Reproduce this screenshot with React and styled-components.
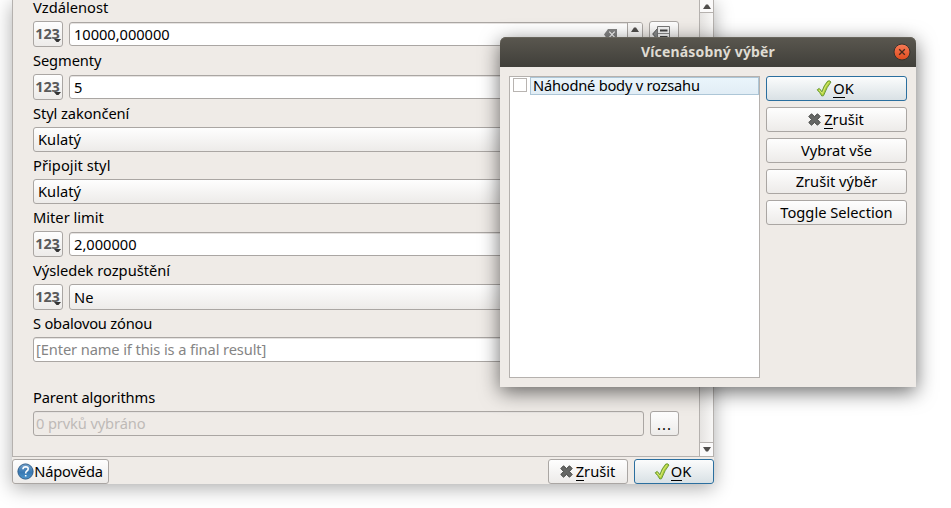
import React from "react";
import styled, { createGlobalStyle, css } from "styled-components";

const Global = createGlobalStyle`
  * { box-sizing: border-box; }
  html, body { margin: 0; background: #fff; overflow: hidden; }
  body { font: 14.67px/20px "Noto Sans", "Open Sans", sans-serif; color: #000; }
`;

const Desktop = styled.main`
  position: relative;
  width: 951px;
  height: 508px;
  overflow: hidden;
  padding-left: 12px;
`;

const Window = styled.section`
  width: 702px;
  height: 484px;
  background: #efebe7;
  box-shadow: 0 4px 18px rgba(0, 0, 0, 0.33);
`;

const ScrollArea = styled.div`
  display: flex;
  height: 457px;
  border: 1px solid #b5b1ae;
  border-top: 0;
`;

const Form = styled.div`
  flex: 1;
  height: 456px;
  padding: 0 20px;
  display: flex;
  flex-direction: column;
`;

const Text = styled.span`
  white-space: nowrap;
  letter-spacing: ${(p) => p.$ls || 0}px;
`;

const Label = styled.label`
  flex: none;
  display: flex;
  align-items: center;
  height: ${(p) => p.$h || 27}px;
  margin-top: ${(p) => p.$top || 0}px;
  padding-bottom: ${(p) => p.$bottom ?? 2}px;
  line-height: 14px;
`;

const Row = styled.div`
  flex: none;
  display: flex;
  align-items: center;
  gap: 6px;
  height: ${(p) => p.$h || 26}px;
`;

const frame = css`
  border: 1px solid #aaa6a3;
  border-radius: 3px;
`;

const raised = css`
  ${frame}
  background: linear-gradient(#fefefe, #edebe9);
`;

const Input = styled.div`
  ${frame}
  flex: 1;
  display: flex;
  align-items: center;
  height: ${(p) => p.$h || 24}px;
  padding-left: ${(p) => p.$pad ?? 4}px;
  padding-bottom: ${(p) => p.$bottom || 0}px;
  background: ${(p) => (p.$disabled ? "#efebe7" : "#fff")};
  box-shadow: inset 0 1px 0 #e6e3e1;
  color: ${(p) => (p.$disabled ? "#bebab7" : p.$hint ? "#858585" : "#000")};
  overflow: hidden;
`;

const Combo = styled.div`
  ${raised}
  flex: 1;
  display: flex;
  align-items: center;
  height: 100%;
  padding: 0 0 1px 4px;
`;

const ToolButton = styled.button`
  ${raised}
  position: relative;
  flex: none;
  display: flex;
  align-items: center;
  justify-content: center;
  width: ${(p) => p.$w || 30}px;
  height: ${(p) => p.$h || 26}px;
  padding: 0 ${(p) => p.$shift || 0}px ${(p) => p.$lift || 0}px 0;
  font: inherit;
`;

const Digits = styled.span`
  font: bold 14.5px/20px "Noto Sans", sans-serif;
  letter-spacing: -0.1px;
  color: #5a5a5a;
`;

const MenuMark = styled.svg`
  position: absolute;
  right: 1px;
  bottom: 3px;
`;

const Spin = styled.span`
  display: flex;
  justify-content: center;
  width: 15px;
  height: 22px;
  padding-top: 4px;
  margin-left: 10px;
  border-left: 1px solid #aaa6a3;
  background: #f8f7f6;
`;

const Grow = styled.span`
  flex: 1;
`;

const ScrollBar = styled.div`
  display: flex;
  flex-direction: column;
  justify-content: space-between;
  width: 14px;
  border-left: 1px solid #b5b1ae;
  background: linear-gradient(90deg, #e5e3e1, #f8f7f6);
`;

const ScrollStep = styled.div`
  display: flex;
  align-items: center;
  justify-content: center;
  height: ${(p) => (p.$up ? 13 : 14)}px;
  padding-bottom: ${(p) => (p.$up ? 0 : 1)}px;
  border-${(p) => (p.$up ? "bottom" : "top")}: 1px solid #b5b1ae;
  background: #fbfafa;
`;

const Footer = styled.footer`
  display: flex;
  gap: 6px;
  padding-top: 2px;
`;

const PushButton = styled.button`
  ${raised}
  display: flex;
  align-items: center;
  justify-content: center;
  gap: ${(p) => p.$gap ?? 2}px;
  width: ${(p) => (p.$w ? `${p.$w}px` : "100%")};
  height: 25px;
  padding: 0 ${(p) => p.$shift || 0}px 2px 0;
  font: inherit;
  color: #000;
  ${(p) =>
    p.$primary &&
    css`
      border-color: #2b6f9f;
      background: linear-gradient(#fbfcfc, #d9e1e5);
    `}
  & > svg { margin-top: 1px; }
`;

const Key = styled.span`
  box-shadow: 0 -1px 0 #000 inset;
  display: inline-block;
  line-height: 19px;
`;

const Dialog = styled.section`
  position: absolute;
  left: 500px;
  top: 37px;
  width: 416px;
  height: 350px;
  border-radius: 6px 6px 0 0;
  background: #efebe7;
  box-shadow: 0 5px 20px rgba(0, 0, 0, 0.58);
`;

const TitleBar = styled.header`
  display: grid;
  grid-template-columns: 23px 1fr 23px;
  align-items: center;
  height: 30px;
  border-radius: 6px 6px 0 0;
  background: linear-gradient(#5a574f, #403f3a);
  box-shadow: inset 0 1px 0 #68655c;
  color: #dfdbd2;
  font-weight: bold;
  font-size: 14px;
  text-align: center;
`;

const DialogBody = styled.div`
  display: flex;
  gap: 6px;
  padding: 9px;
`;

const List = styled.div`
  width: 251px;
  height: 302px;
  border: 1px solid #b5b1ae;
  background: #fff;
`;

const ListItem = styled.div`
  display: flex;
  align-items: flex-start;
  gap: 3px;
  padding: 0 0 0 3px;
`;

const CheckBox = styled.span`
  width: 14px;
  height: 14px;
  margin-top: 1px;
  border: 1px solid #b8b4b1;
`;

const Selected = styled.span`
  flex: 1;
  display: flex;
  align-items: center;
  height: 18px;
  padding: 0 0 2px 2px;
  border: 1px solid #adc6d7;
  background: linear-gradient(#eaf5fb, #e1edf5);
`;

const Actions = styled.div`
  display: flex;
  flex-direction: column;
  gap: 6px;
  width: 141px;
`;

const Triangle = ({ up }) => (
  <svg width="8" height="5" viewBox="0 0 8 5">
    <path d={up ? "M0 5L3 0.5H5L8 5Z" : "M0 0L3 4.5H5L8 0Z"} fill="#504e4c" />
  </svg>
);

const Check = () => (
  <svg width="16" height="17" viewBox="0 0 16 17">
    <path
      d="M1.2 9.8L3.2 8.4Q4.5 9.4 5.8 11.8Q8 5 11.7 1.1Q13.8 .2 15 2Q11 6.5 7.5 15.7L5.8 16Q3.8 12.2 1.2 9.8Z"
      fill="#b3d335"
      stroke="#6a9a3a"
      strokeLinejoin="round"
    />
    <path d="M3 10L6.4 13.5Q9 6 12.7 2.2" fill="none" stroke="#d5e77d" />
  </svg>
);

const Cross = () => (
  <svg width="13" height="13" viewBox="0 0 13 13">
    <path
      d="M3.5 .8L6.5 3.6L9.5 .8L12.2 3.5L9.4 6.5L12.2 9.5L9.5 12.2L6.5 9.4L3.5 12.2L.8 9.5L3.6 6.5L.8 3.5Z"
      fill="#666765"
      stroke="#464745"
      strokeLinejoin="round"
    />
  </svg>
);

const Help = () => (
  <svg width="17" height="17" viewBox="0 0 17 17">
    <defs>
      <linearGradient id="help" x2="0" y2="1">
        <stop stopColor="#77a4cd" />
        <stop offset=".55" stopColor="#3878b2" />
        <stop offset="1" stopColor="#4b95cc" />
      </linearGradient>
    </defs>
    <circle cx="8.5" cy="8.5" r="7.6" fill="url(#help)" stroke="#315f8b" />
    <path
      d="M5.9 6.3Q6 3.7 8.7 3.7Q11.3 3.8 11.2 6Q11.1 7.4 9.6 8.2Q8.7 8.8 8.7 10.5M8.7 12V13.6"
      fill="none"
      stroke="#fff"
      strokeWidth="1.6"
    />
  </svg>
);

const ClearIcon = () => (
  <svg width="13" height="11" viewBox="0 0 13 11">
    <path d="M0 5.5L4 0H13V11H4Z" fill="#848484" />
    <path d="M5.3 2.7L10.7 8.3M10.7 2.7L5.3 8.3" stroke="#fff" strokeWidth="1.1" />
  </svg>
);

const OverrideIcon = () => (
  <svg width="19" height="17" viewBox="0 0 19 17">
    <path d="M5.5 2.5L.7 8L5.5 13.5Z" fill="#888a8a" stroke="#555" />
    <path d="M5.5 .5H17.5V14.5H5.5Z" fill="#f5f5f5" stroke="#777" />
    <path d="M8 4.5H15.5M8 11H15.5" stroke="#444" strokeWidth="2" />
    <path d="M6 7.5H17" stroke="#888" />
  </svg>
);

const CloseIcon = () => (
  <svg width="18" height="18" viewBox="0 0 18 18">
    <defs>
      <linearGradient id="close" x2="0" y2="1">
        <stop stopColor="#f77b57" />
        <stop offset="1" stopColor="#df4b1d" />
      </linearGradient>
    </defs>
    <circle cx="9" cy="9" r="8" fill="url(#close)" stroke="#35332e" />
    <path d="M6.2 6.2L11.8 11.8M11.8 6.2L6.2 11.8" stroke="#44291d" strokeWidth="1.3" />
  </svg>
);

const NumberSource = () => (
  <ToolButton $shift={1} $lift={2}>
    <Digits>123</Digits>
    <MenuMark width="7" height="4" viewBox="0 0 7 4">
      <path d="M0 0H7L4.5 3H2.5Z" fill="#333" />
    </MenuMark>
  </ToolButton>
);

const OkButton = ({ w }) => (
  <PushButton $w={w} $primary $gap={1} $shift={3}>
    <Check />
    <Text><Key>O</Key>K</Text>
  </PushButton>
);

const CancelButton = ({ w }) => (
  <PushButton $w={w} $gap={3} $shift={1}>
    <Cross />
    <Text><Key>Z</Key>rušit</Text>
  </PushButton>
);

export default function App() {
  return (
    <Desktop>
      <Global />
      <Window>
        <ScrollArea>
          <Form>
            <Label $h={21} $bottom={7}><Text>Vzdálenost</Text></Label>
            <Row>
              <NumberSource />
              <Input>
                <Text $ls={-0.05}>10000,000000</Text>
                <Grow />
                <ClearIcon />
                <Spin><Triangle up /></Spin>
              </Input>
              <ToolButton $shift={5}><OverrideIcon /></ToolButton>
            </Row>
            <Label><Text $ls={-0.1}>Segmenty</Text></Label>
            <Row>
              <NumberSource />
              <Input><Text>5</Text></Input>
            </Row>
            <Label><Text $ls={-0.08}>Styl zakončení</Text></Label>
            <Row $h={25}><Combo><Text>Kulatý</Text></Combo></Row>
            <Label><Text $ls={0.05}>Připojit styl</Text></Label>
            <Row $h={25}><Combo><Text>Kulatý</Text></Combo></Row>
            <Label><Text>Miter limit</Text></Label>
            <Row>
              <NumberSource />
              <Input><Text>2,000000</Text></Input>
            </Row>
            <Label><Text>Výsledek rozpuštění</Text></Label>
            <Row>
              <NumberSource />
              <Combo><Text>Ne</Text></Combo>
            </Row>
            <Label><Text $ls={-0.2}>S obalovou zónou</Text></Label>
            <Row $h={25}>
              <Input $h={25} $pad={2} $bottom={2} $hint>
                <Text $ls={-0.11}>[Enter name if this is a final result]</Text>
              </Input>
            </Row>
            <Label $top={22}><Text $ls={-0.12}>Parent algorithms</Text></Label>
            <Row $h={25}>
              <Input $h={25} $pad={2} $bottom={2} $disabled>
                <Text $ls={-0.12}>0 prvků vybráno</Text>
              </Input>
              <ToolButton $w={29} $h={25}><Text $ls={1}>...</Text></ToolButton>
            </Row>
          </Form>
          <ScrollBar>
            <ScrollStep $up><Triangle up /></ScrollStep>
            <ScrollStep><Triangle /></ScrollStep>
          </ScrollBar>
        </ScrollArea>
        <Footer>
          <PushButton $w={97} $gap={0} $shift={1}>
            <Help />
            <Text $ls={-0.16}>Nápověda</Text>
          </PushButton>
          <Grow />
          <CancelButton w={80} />
          <OkButton w={80} />
        </Footer>
      </Window>
      <Dialog>
        <TitleBar>
          <span />
          <Text $ls={0.17}>Vícenásobný výběr</Text>
          <CloseIcon />
        </TitleBar>
        <DialogBody>
          <List>
            <ListItem>
              <CheckBox />
              <Selected><Text $ls={-0.22}>Náhodné body v rozsahu</Text></Selected>
            </ListItem>
          </List>
          <Actions>
            <OkButton />
            <CancelButton />
            <PushButton><Text>Vybrat vše</Text></PushButton>
            <PushButton><Text>Zrušit výběr</Text></PushButton>
            <PushButton><Text>Toggle Selection</Text></PushButton>
          </Actions>
        </DialogBody>
      </Dialog>
    </Desktop>
  );
}
